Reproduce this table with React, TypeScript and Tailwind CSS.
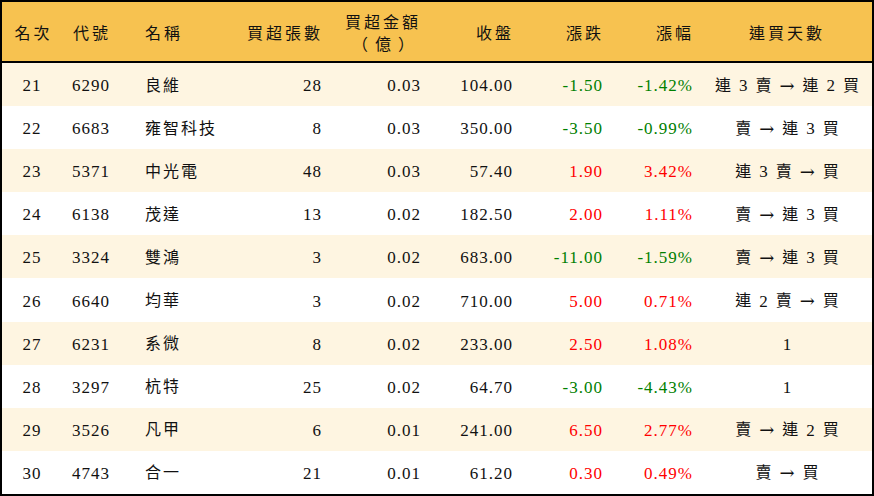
import React from "react";

type Row = {
  rank: string;
  code: string;
  name: string;
  vol: string;
  amt: string;
  close: string;
  chg: string;
  pct: string;
  days: string;
};

const rows: Row[] = [
  { rank: "21", code: "6290", name: "良維", vol: "28", amt: "0.03", close: "104.00", chg: "-1.50", pct: "-1.42%", days: "連 3 賣 → 連 2 買" },
  { rank: "22", code: "6683", name: "雍智科技", vol: "8", amt: "0.03", close: "350.00", chg: "-3.50", pct: "-0.99%", days: "賣 → 連 3 買" },
  { rank: "23", code: "5371", name: "中光電", vol: "48", amt: "0.03", close: "57.40", chg: "1.90", pct: "3.42%", days: "連 3 賣 → 買" },
  { rank: "24", code: "6138", name: "茂達", vol: "13", amt: "0.02", close: "182.50", chg: "2.00", pct: "1.11%", days: "賣 → 連 3 買" },
  { rank: "25", code: "3324", name: "雙鴻", vol: "3", amt: "0.02", close: "683.00", chg: "-11.00", pct: "-1.59%", days: "賣 → 連 3 買" },
  { rank: "26", code: "6640", name: "均華", vol: "3", amt: "0.02", close: "710.00", chg: "5.00", pct: "0.71%", days: "連 2 賣 → 買" },
  { rank: "27", code: "6231", name: "系微", vol: "8", amt: "0.02", close: "233.00", chg: "2.50", pct: "1.08%", days: "1" },
  { rank: "28", code: "3297", name: "杭特", vol: "25", amt: "0.02", close: "64.70", chg: "-3.00", pct: "-4.43%", days: "1" },
  { rank: "29", code: "3526", name: "凡甲", vol: "6", amt: "0.01", close: "241.00", chg: "6.50", pct: "2.77%", days: "賣 → 連 2 買" },
  { rank: "30", code: "4743", name: "合一", vol: "21", amt: "0.01", close: "61.20", chg: "0.30", pct: "0.49%", days: "賣 → 買" },
];

const grid =
  "grid grid-cols-[60px_73px_95px_101px_99px_92px_90px_90px_170px] items-center";

function Days({ text }: { text: string }) {
  const parts = text.split(" ");
  return (
    <div className="flex justify-center items-center gap-[8px] text-[16px] tracking-normal">
      {parts.map((p, i) =>
        p === "→" ? (
          <span
            key={i}
            className="text-[18px]"
            style={{ fontFamily: '"DejaVu Serif", serif' }}
          >
            →
          </span>
        ) : (
          <span key={i} className={/\d/.test(p) ? "text-[17px]" : ""}>
            {p}
          </span>
        )
      )}
    </div>
  );
}

export default function App() {
  return (
    <div
      className="w-[874px] h-[496px] bg-white text-[#111] text-[17px] tracking-[1px] leading-none"
      style={{ fontFamily: '"Liberation Serif", "Noto Sans CJK TC", serif' }}
    >
      <div className="border-2 border-black w-[874px] h-[496px] flex flex-col">
        <div
          className={`${grid} h-[61px] shrink-0 pt-[5px] bg-[#f7c250] border-b-2 border-black text-[16px] tracking-[3px]`}
        >
          <div className="text-center pl-[3px]">名次</div>
          <div className="pl-[11px]">代號</div>
          <div className="pl-[10px]">名稱</div>
          <div className="text-right pr-[8px]">買超張數</div>
          <div className="flex justify-end pr-[9px]">
            <div className="flex flex-col items-center leading-[21px] -mt-[3px]">
              <div>買超金額</div>
              <div
                className="flex items-center gap-[7px] tracking-normal"
                style={{ fontFamily: '"Noto Sans CJK TC", sans-serif' }}
              >
                <span>（</span>
                <span>億</span>
                <span>）</span>
              </div>
            </div>
          </div>
          <div className="text-right pr-[8px]">收盤</div>
          <div className="text-right pr-[8px]">漲跌</div>
          <div className="text-right pr-[8px]">漲幅</div>
          <div className="text-center">連買天數</div>
        </div>
        {rows.map((r, i) => {
          const up = !r.chg.startsWith("-");
          const color = up ? "text-[#ff0000]" : "text-[#008000]";
          return (
            <div
              key={r.rank}
              className={`${grid} flex-1 pt-[2px] ${i % 2 === 0 ? "bg-[#fef5e1]" : "bg-white"}`}
            >
              <div className="text-center">{r.rank}</div>
              <div className="pl-[10px]">{r.code}</div>
              <div className="pl-[10px] text-[16px] tracking-[2px]">{r.name}</div>
              <div className="text-right pr-[9px]">{r.vol}</div>
              <div className="text-right pr-[9px]">{r.amt}</div>
              <div className="text-right pr-[9px]">{r.close}</div>
              <div className={`text-right pr-[9px] ${color}`}>{r.chg}</div>
              <div className={`text-right pr-[9px] ${color}`}>{r.pct}</div>
              <Days text={r.days} />
            </div>
          );
        })}
      </div>
    </div>
  );
}
